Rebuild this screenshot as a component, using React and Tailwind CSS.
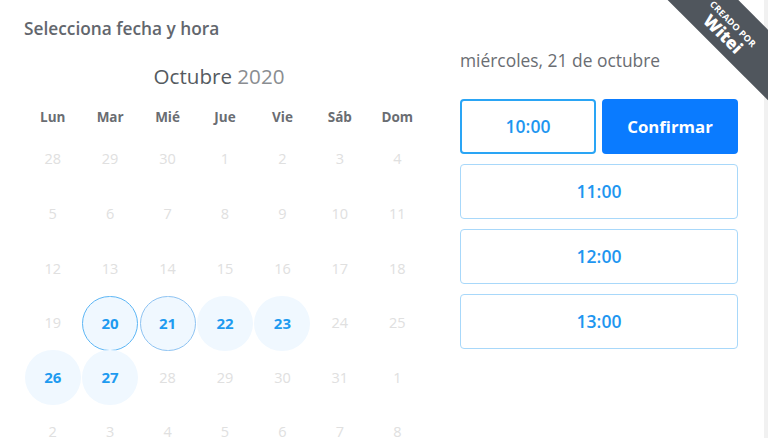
import React from 'react';

const dayNames = ['Lun', 'Mar', 'Mié', 'Jue', 'Vie', 'Sáb', 'Dom'];

// semanas de octubre 2020 (empieza en lunes 28 sep)
const weeks = [
  [28, 29, 30, 1, 2, 3, 4],
  [5, 6, 7, 8, 9, 10, 11],
  [12, 13, 14, 15, 16, 17, 18],
  [19, 20, 21, 22, 23, 24, 25],
  [26, 27, 28, 29, 30, 31, 1],
  [2, 3, 4, 5, 6, 7, 8],
];

const available = [20, 21, 22, 23, 26, 27];

function DayCell({ day, row }) {
  const isOpen = (row === 3 || row === 4) && available.includes(day);
  const isToday = row === 3 && day === 20;
  const isSelected = row === 3 && day === 21;

  if (!isOpen) {
    return (
      <div className="flex items-center justify-center text-[14.5px] text-[#e0e0e0]">
        {day}
      </div>
    );
  }

  let ring = 'border border-transparent';
  if (isToday) ring = 'border border-[#5cb6f5]';
  if (isSelected) ring = 'border border-[#8ec3f2]';

  return (
    <div className="flex items-center justify-center">
      <div className={`w-[56px] h-[55px] rounded-full bg-[#f0f8ff] flex items-center justify-center text-[15px] font-bold text-[#1e9bf0] ${ring}`}>
        {day}
      </div>
    </div>
  );
}

export default function App() {
  return (
    <div
      className="relative w-[768px] h-[438px] overflow-hidden bg-white flex"
      style={{ fontFamily: '"Open Sans", "Noto Sans", sans-serif' }}
    >
      {/* calendario */}
      <div className="w-[426px] pl-[24px] pt-[18px] shrink-0">
        <h2 className="text-[17.3px] leading-[22px] font-semibold text-[#62666d]">Selecciona fecha y hora</h2>
        <div className="mt-[22px] h-[28px] text-[20.6px] leading-[28px] text-center text-[#555a60] pr-[12px]">
          Octubre <span className="text-[#8a8d91]">2020</span>
        </div>
        <div className="mt-[17px] grid grid-cols-7 h-[20px]">
          {dayNames.map((d) => (
            <div key={d} className="text-center text-[13.5px] leading-[20px] font-bold text-[#6a6d72]">{d}</div>
          ))}
        </div>
        <div className="mt-[5px] grid grid-cols-7 auto-rows-[54.6px]">
          {weeks.map((w, r) => w.map((d, i) => <DayCell key={`${r}-${i}`} day={d} row={r} />))}
        </div>
      </div>

      {/* horarios */}
      <div className="ml-[34px] w-[278px] pt-[48px] shrink-0">
        <p className="text-[17.4px] leading-[24px] text-[#6a6d72]">miércoles, 21 de octubre</p>
        <div className="mt-[27px] flex flex-col gap-[10px]">
          <div className="flex gap-[6px]">
            <button className="w-[136px] h-[55px] rounded-[4px] border-2 border-[#2aa5f5] bg-white text-[17.5px] font-semibold text-[#1e96f0]">10:00</button>
            <button className="w-[136px] h-[55px] rounded-[4px] bg-[#0a7bff] text-[16.8px] font-bold text-white">Confirmar</button>
          </div>
          {['11:00', '12:00', '13:00'].map((t) => (
            <button key={t} className="w-full h-[55px] rounded-[4px] border border-[#a8d8fa] bg-white text-[17.5px] font-semibold text-[#1e96f0]">{t}</button>
          ))}
        </div>
      </div>

      {/* barra derecha */}
      <div className="absolute right-0 top-0 bottom-0 w-[4px] bg-[#f1f1f1]" />

      {/* cinta */}
      <div className="absolute left-[648px] top-[2px] w-[164px] h-[50px] pt-[9px] bg-[#50565d] rotate-45 flex flex-col items-center justify-center text-white leading-none">
        <span className="text-[9px] font-bold tracking-[0.3px] uppercase">Creado por</span>
        <span className="text-[17px] font-extrabold mt-[1px]">Witei</span>
      </div>
    </div>
  );
}
